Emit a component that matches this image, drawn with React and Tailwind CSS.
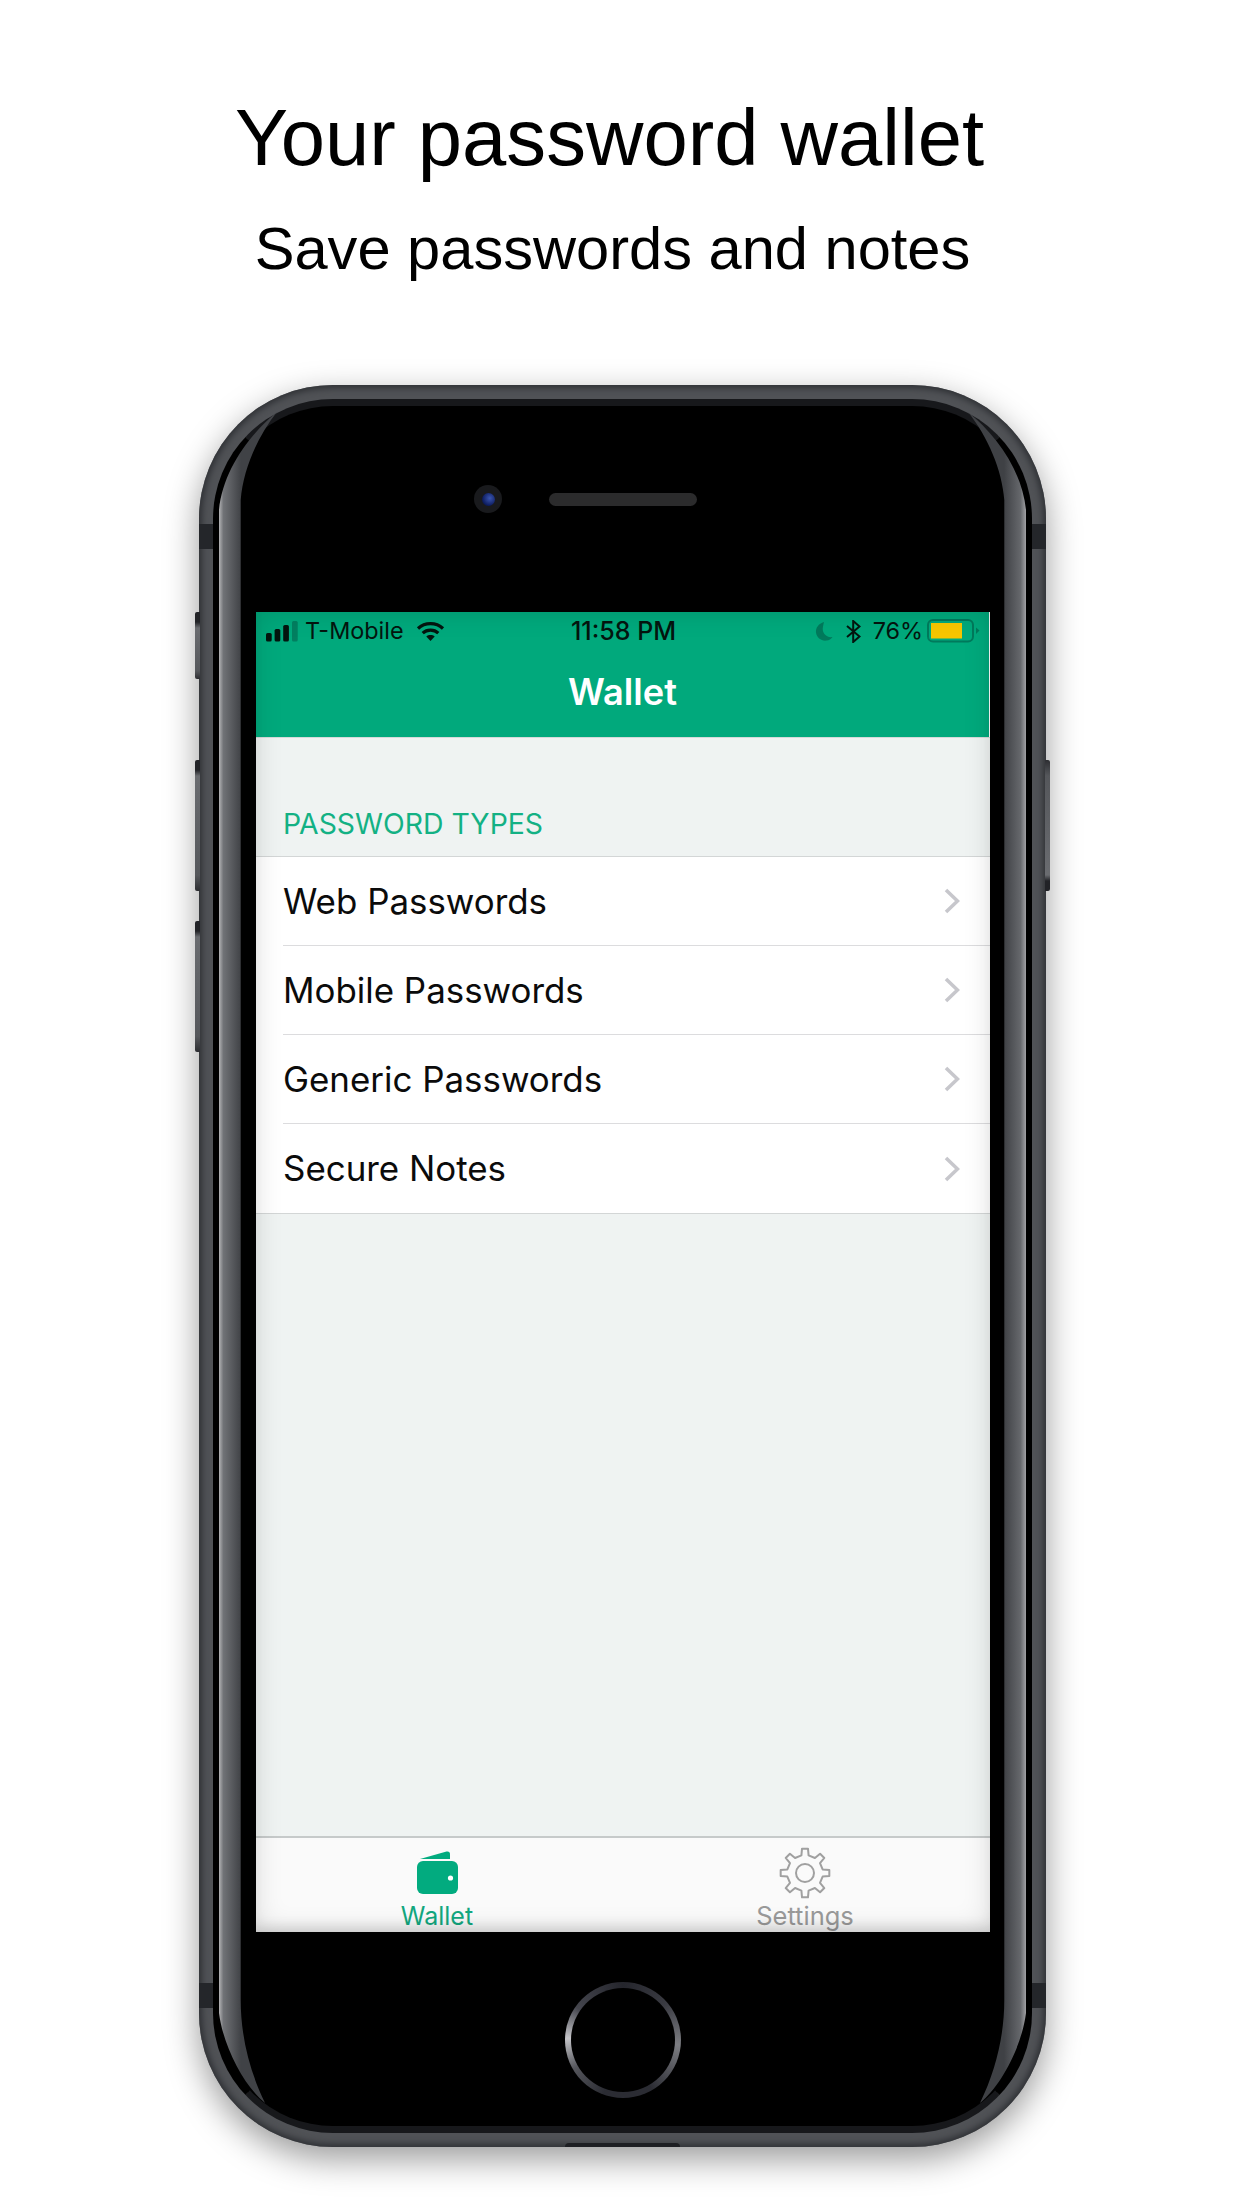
import React from "react";

const rows = ["Web Passwords", "Mobile Passwords", "Generic Passwords", "Secure Notes"];

function gearPath(cx, cy, R, r, n) {
  let d = "";
  const pt = (rad, deg) => {
    const a = (deg * Math.PI) / 180;
    return `${(cx + rad * Math.sin(a)).toFixed(2)} ${(cy - rad * Math.cos(a)).toFixed(2)}`;
  };
  for (let i = 0; i < n; i++) {
    const c = (360 / n) * i;
    d += `${i === 0 ? "M" : "L"}${pt(r, c - 11.5)} L${pt(R, c - 7)} L${pt(R, c + 7)} L${pt(r, c + 11.5)} `;
  }
  return d + "Z";
}

function Signal() {
  return (
    <svg width="33" height="21" viewBox="0 0 33 21" className="shrink-0">
      <rect x="0" y="12" width="5.7" height="8.5" rx="1.6" fill="#04150f" />
      <rect x="8.6" y="8" width="5.7" height="12.5" rx="1.6" fill="#04150f" />
      <rect x="17.2" y="4" width="5.7" height="16.5" rx="1.6" fill="#04150f" />
      <rect x="26" y="0" width="5.7" height="20.5" rx="1.6" fill="#027f60" />
    </svg>
  );
}

function Wifi() {
  return (
    <svg width="29" height="21" viewBox="0 0 28 21" className="shrink-0">
      <path d="M1.5 7.5C8.5 1 19.5 1 26.5 7.5" fill="none" stroke="#04150f" strokeWidth="3.2" />
      <path d="M6.2 12.2C10.5 8.2 17.5 8.2 21.8 12.2" fill="none" stroke="#04150f" strokeWidth="3.2" />
      <path d="M9.8 15.5C12.2 13.6 15.8 13.6 18.2 15.5L14 20Z" fill="#04150f" />
    </svg>
  );
}

function Moon() {
  return (
    <svg width="18" height="21" viewBox="0 0 18 21" className="shrink-0">
      <path d="M9 1C3.5 2.5 0.5 7 1 11.5 1.6 16.8 6.6 20.3 11.5 19.6 14 19.2 16.3 18 17.5 16 11.5 17 6.5 12 8 5.5 8.3 4 8.6 2.5 9 1Z" fill="#017a5c" />
    </svg>
  );
}

function Bluetooth() {
  return (
    <svg width="15" height="23" viewBox="0 0 15 23" className="shrink-0">
      <path d="M1 6L13.5 16.5 7.2 22V1L13.5 6.5 1 17" fill="none" stroke="#04150f" strokeWidth="2" />
    </svg>
  );
}

function Battery() {
  return (
    <svg width="53" height="24" viewBox="0 0 53 24" className="shrink-0">
      <rect x="1" y="1" width="45" height="21.5" rx="5" fill="none" stroke="#017a5c" strokeWidth="2" />
      <rect x="4" y="4" width="31" height="15.5" fill="#f7c600" />
      <path d="M49 8.5L52.5 11.5 49 15Z" fill="#017a5c" />
    </svg>
  );
}

function WalletIcon() {
  return (
    <svg width="41" height="43" viewBox="0 0 41 43">
      <path d="M3 8L29.5 0.6Q33 0 33 3.2V8Z" fill="#02ab7f" />
      <rect x="0" y="10" width="41" height="33" rx="6" fill="#02ab7f" />
      <circle cx="33.5" cy="27" r="2.6" fill="#fff" />
    </svg>
  );
}

function GearIcon() {
  return (
    <svg width="52" height="52" viewBox="0 0 52 52">
      <path d={gearPath(26, 26, 24.5, 18, 8)} fill="none" stroke="#a0a0a0" strokeWidth="2" strokeLinejoin="round" />
      <circle cx="26" cy="26" r="9" fill="none" stroke="#a0a0a0" strokeWidth="2" />
    </svg>
  );
}

function Chevron() {
  return (
    <svg width="16" height="26" viewBox="0 0 16 26" className="shrink-0">
      <path d="M2 2L13.5 13 2 24" fill="none" stroke="#c7c7cc" strokeWidth="3.6" />
    </svg>
  );
}

function Gloss() {
  const left =
    "M78 27C50 50 24 85 20 125V1628C24 1660 44 1700 66 1718C50 1685 41.7 1650 41.7 1615V115C44 85 58 52 78 27Z";
  const right =
    "M769 27C797 50 823 85 827 125V1628C823 1660 803 1700 781 1718C797 1685 805.3 1650 805.3 1615V115C803 85 789 52 769 27Z";
  return (
    <svg width="847" height="1762" viewBox="0 0 847 1762" className="pointer-events-none absolute left-0 top-0">
      <defs>
        <linearGradient id="gl" gradientUnits="userSpaceOnUse" x1="20" y1="0" x2="42" y2="0">
          <stop offset="0" stopColor="#b4b4b6" />
          <stop offset="0.2" stopColor="#707276" />
          <stop offset="1" stopColor="#404246" />
        </linearGradient>
        <linearGradient id="gr" gradientUnits="userSpaceOnUse" x1="827" y1="0" x2="805" y2="0">
          <stop offset="0" stopColor="#a0a0a3" />
          <stop offset="0.25" stopColor="#66686c" />
          <stop offset="1" stopColor="#3f4145" />
        </linearGradient>
      </defs>
      <path d={left} fill="url(#gl)" />
      <path d={right} fill="url(#gr)" />
    </svg>
  );
}

function SideButton({ className }) {
  return (
    <div
      className={`absolute w-[5px] rounded-l-[2px] bg-[linear-gradient(to_bottom,#222327_0,#222327_10px,#6a6c70_16px,#55575b_88%,#2d2e32_100%)] ${className}`}
    />
  );
}

function Band({ className }) {
  return <div className={`absolute h-[25px] w-[14px] bg-[#24262a] ${className}`} />;
}

export default function App() {
  return (
    <div className="relative flex h-[2208px] w-[1242px] flex-col items-center overflow-hidden bg-white font-['Liberation_Sans',sans-serif] text-black">
      <div className="flex h-[385px] w-full flex-col items-center pr-[23px] pt-[88px]">
        <h1 className="text-[79.6px] font-normal leading-[100px]">Your password wallet</h1>
        <p className="mt-[26px] pl-[6px] text-[59.6px] leading-[70px]">Save passwords and notes</p>
      </div>

      <div className="relative ml-[3px] h-[1762px] w-[847px] shrink-0 rounded-[134px] bg-[#505256] p-[14px] shadow-[0_12px_34px_rgba(0,0,0,0.4),inset_0_0_6px_3px_#2f3135]">
        <SideButton className="left-[-4px] top-[227px] h-[67px]" />
        <SideButton className="left-[-4px] top-[375px] h-[131px]" />
        <SideButton className="left-[-4px] top-[536px] h-[131px]" />
        <SideButton className="right-[-4px] top-[375px] h-[131px] rotate-180" />

        <div className="flex h-full w-full flex-col items-center overflow-hidden rounded-[120px] border-x-[6px] border-y-[7px] border-x-black border-y-[#17181b] bg-black pl-[1px] pt-[79px]">
          <div className="ml-[254px] flex items-center self-start">
            <div className="flex h-[28px] w-[28px] items-center justify-center rounded-full bg-[#191a1d]">
              <div className="h-[13px] w-[13px] rounded-full bg-[radial-gradient(circle_at_60%_40%,#3a55b0,#0b1a5a_70%)]" />
            </div>
            <div className="ml-[47px] h-[13px] w-[148px] rounded-full bg-[#2b2b2c]" />
          </div>

          <div className="relative mt-[99px] flex h-[1320px] w-[734px] shrink-0 flex-col overflow-hidden bg-[#eff3f2] font-['Inter',sans-serif]">
            <div className="flex h-[125px] shrink-0 flex-col border-r border-white bg-[#01a97c]">
              <div className="grid h-[38px] grid-cols-[1fr_auto_1fr] items-center text-[23.4px] leading-none text-[#04150f]">
                <div className="flex items-center pl-[10px]">
                  <Signal />
                  <span className="ml-[6px]">T-Mobile</span>
                  <span className="ml-[12px]"><Wifi /></span>
                </div>
                <span className="pl-[2px] text-[25px] font-medium">11:58 PM</span>
                <div className="flex items-center justify-end pr-[9px]">
                  <Moon />
                  <span className="ml-[13px]"><Bluetooth /></span>
                  <span className="ml-[12px]">76%</span>
                  <span className="ml-[4px]"><Battery /></span>
                </div>
              </div>
              <div className="flex flex-1 items-center justify-center pb-[3px] text-[36.2px] font-semibold leading-none text-white">
                Wallet
              </div>
            </div>

            <div className="flex flex-1 flex-col border-t border-[#d5dad9]">
              <div className="flex h-[118px] items-end pb-[18px] pl-[27px] text-[28.4px] leading-none text-[#13b184]">
                PASSWORD TYPES
              </div>
              <div className="border-y border-[#d3d6d6] bg-white">
                {rows.map((label, i) => (
                  <div key={label} className="pl-[27px]">
                    <div className={`flex h-[89px] items-center justify-between pr-[30px] text-[34.9px] leading-none text-[#0b0b0b] ${i < rows.length - 1 ? "border-b border-[#dcdcde]" : ""}`}>
                      <span>{label}</span>
                      <Chevron />
                    </div>
                  </div>
                ))}
              </div>
            </div>

            <div className="grid h-[96px] shrink-0 grid-cols-[362px_374px] border-t-2 border-[#c6caca] bg-[#fafafa]">
              <div className="flex flex-col items-center pt-[13px]">
                <WalletIcon />
                <span className="mt-[10px] text-[25px] leading-none text-[#13a880]">Wallet</span>
              </div>
              <div className="flex flex-col items-center pt-[9px]">
                <GearIcon />
                <span className="mt-[4px] text-[25.5px] leading-none text-[#9a9a9a]">Settings</span>
              </div>
            </div>

            <div className="pointer-events-none absolute inset-0 shadow-[inset_0_0_28px_rgba(0,0,0,0.13),inset_0_-10px_14px_-6px_rgba(0,0,0,0.14)]" />
          </div>

          <div className="mt-[50px] flex h-[116px] w-[116px] shrink-0 items-center justify-center rounded-full bg-[conic-gradient(from_0deg,#24252c,#3a3b42_50deg,#7c7d82_95deg,#2b2c33_150deg,#2b2c33_200deg,#55565c_240deg,#c4c4c8_272deg,#45464e_305deg,#24252c)]">
            <div className="h-[104px] w-[104px] rounded-full bg-black" />
          </div>
        </div>

        <Band className="left-0 top-[139px]" />
        <Band className="right-0 top-[139px]" />
        <Band className="left-0 top-[1598px]" />
        <Band className="right-0 top-[1598px]" />
        <div className="absolute bottom-0 left-[366px] h-[4px] w-[115px] rounded-t-[4px] bg-[#1e1f23]" />

        <Gloss />
      </div>
    </div>
  );
}
